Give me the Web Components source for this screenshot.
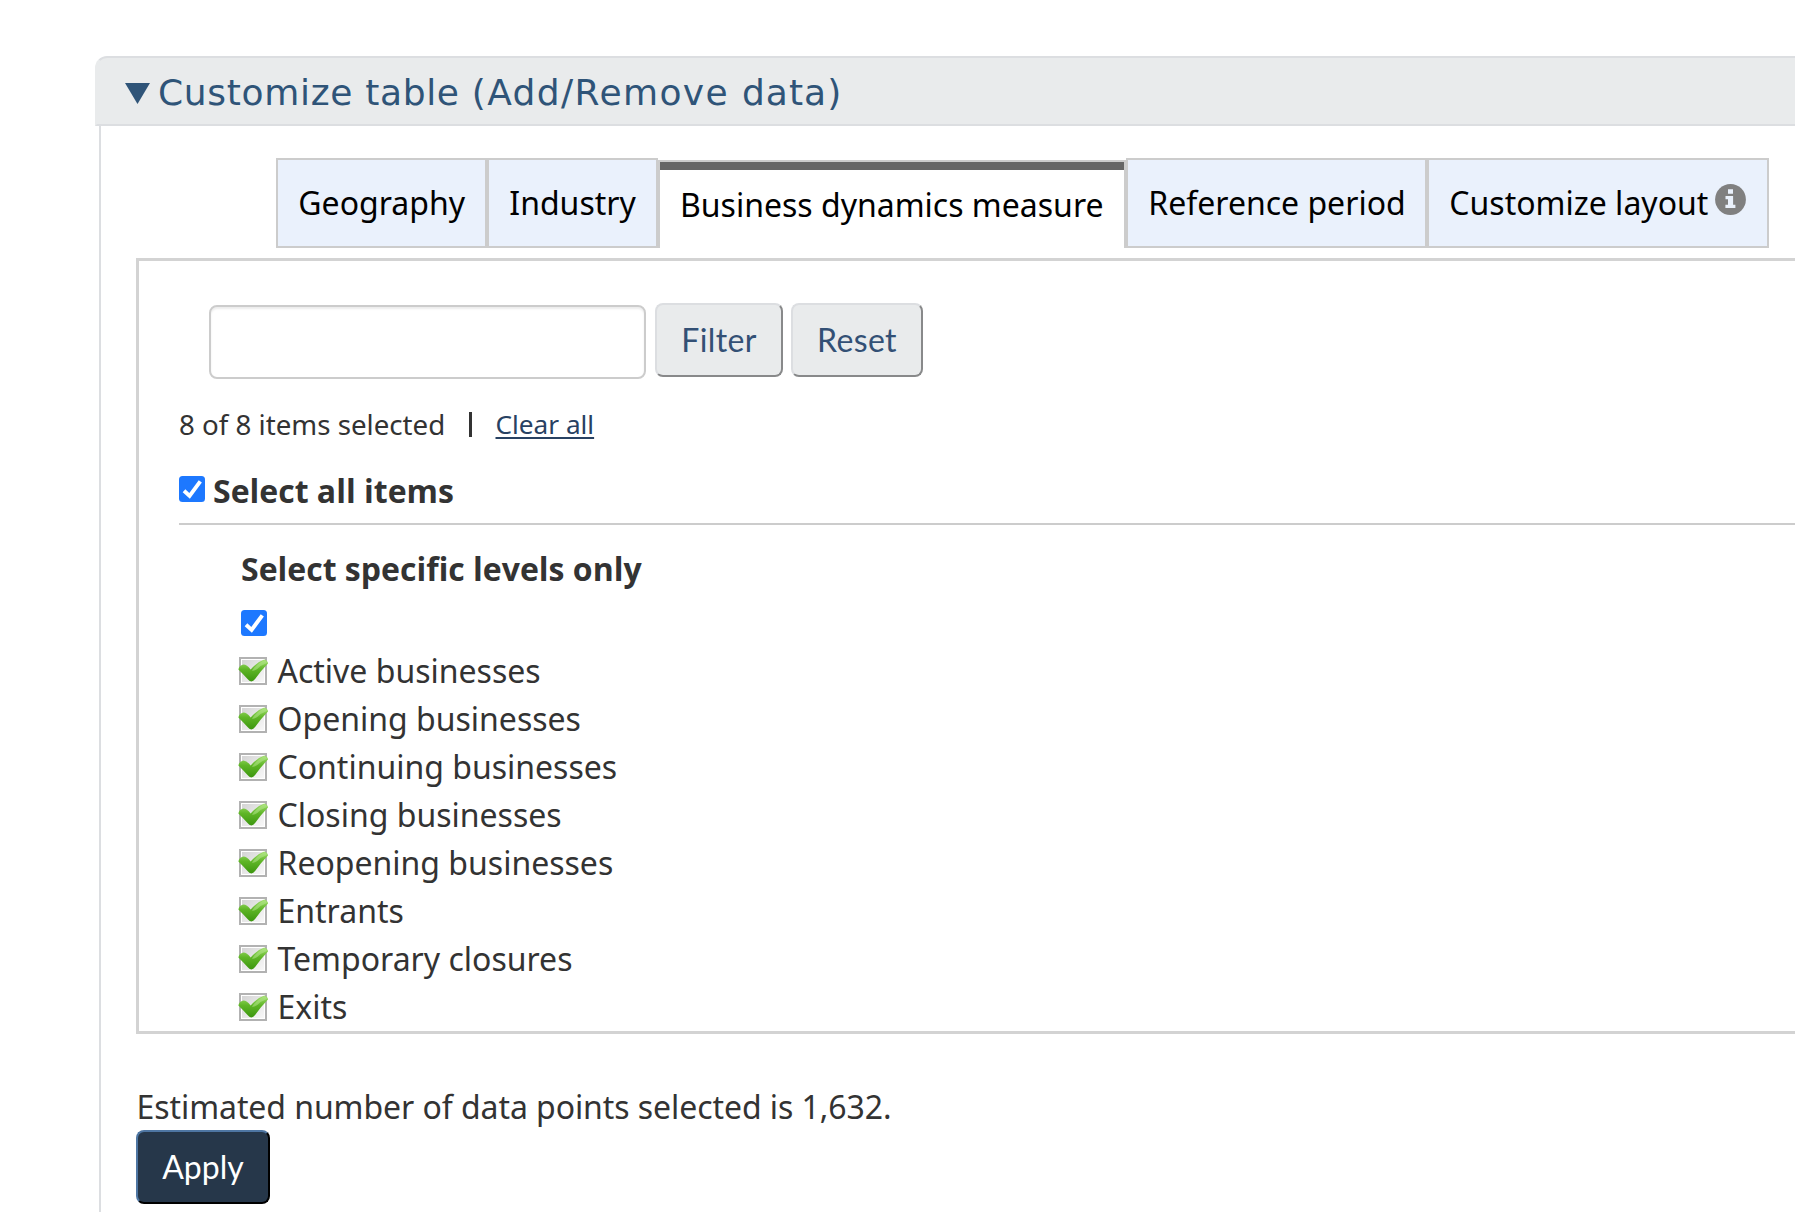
<!DOCTYPE html>
<html lang="en">
<head>
<meta charset="utf-8">
<title>Customize table</title>
<style>
html,body{margin:0;background:#fff}
body{height:1212px;overflow:hidden;font:32px/48px "Noto Sans","Open Sans",sans-serif;color:#333}
</style>
</head>
<body>
<customize-table></customize-table>
<script>
const define=(name,html,init)=>customElements.define(name,class extends HTMLElement{
  constructor(){super();this.attachShadow({mode:'open'}).innerHTML=html;}
  connectedCallback(){if(init)init.call(this,this.shadowRoot);}
});

define('panel-heading',`<style>
:host{display:flex;box-sizing:border-box;height:70px;background:#e9ebec;border:2px solid #dcdee1;border-left-color:#e9ebec;border-right:0;border-radius:12px 0 0 0;color:#2f5478;font:36px/66px "DejaVu Sans",sans-serif;padding:2px 0 0 28px}
svg{width:25px;height:21px;margin:23px 8px 0 0;flex:none}
span{white-space:nowrap;letter-spacing:1.02px}
</style><svg viewBox="0 0 25 21"><path d="M0 0H25L12.5 21Z" fill="#2f5478"/></svg><span><slot></slot></span>`);

define('info-icon',`<style>:host{display:block;width:31px;height:31px}svg{display:block}</style>
<svg width="31" height="31" viewBox="0 0 31 31"><circle cx="15.5" cy="15.5" r="15.4" fill="#808080"/><path fill="#eaf1fc" d="M13 5.2h5v4.6h-5zM10.5 12h7.6v8.8h2.3v3.3H10.4v-3.3H13v-5.5h-2.5z"/></svg>`);

define('tab-item',`<style>
:host{display:flex;box-sizing:border-box;height:90px;border:2px solid #ccc;background:#eaf1fc;color:#000;padding:19px 0 0 20.300px;white-space:nowrap}
:host([active]){background:#fff;border-bottom:0;margin-top:2px;height:88px;box-shadow:inset 0 8px #666;padding-left:20px}
::slotted(info-icon){margin:5px 0 0 7px}
</style><span><slot></slot></span><slot name="icon"></slot>`);

define('text-field',`<style>
:host{display:block}
input{display:block;box-sizing:border-box;width:437px;height:74px;margin:0;border:2px solid #ccc;border-radius:8px;background:#fff;box-shadow:inset 0 2px 2px rgba(0,0,0,.075);font:inherit;outline:0}
</style><input type="text" aria-label="Filter items">`);

define('push-button',`<style>
:host{display:block}
button{display:block;box-sizing:border-box;width:var(--w);height:74px;margin:0;padding:0;border:2px solid;border-color:#dcdee1 #88898a #88898a #dcdee1;border-radius:8px;background:#e9ebec;color:#335075;font:32px/46px Lato,sans-serif;letter-spacing:.35px}
:host([primary]) button{background:#26374a;color:#fff;border-color:#4e76a3 #000 #000 #4e76a3;letter-spacing:0}
</style><button><slot></slot></button>`);

define('blue-check',`<style>:host{display:block;width:26px;height:26px;flex:none}svg{display:block}</style>
<svg width="26" height="26" viewBox="0 0 26 26"><rect width="26" height="26" rx="3.5" fill="#1d78ff"/><path d="M5 14.7l5.6 5.2L21.3 5.3" fill="none" stroke="#fff" stroke-width="3.9"/></svg>`);

define('green-check',`<style>:host{display:block;width:32px;height:30px;flex:none}svg{display:block}</style>
<svg width="32" height="30" viewBox="0 0 32 30"><defs>
<linearGradient id="b" x1="0" y1="0" x2="1" y2="1"><stop offset="0" stop-color="#d4d4d4"/><stop offset="1" stop-color="#f8f8f8"/></linearGradient>
<linearGradient id="g" x1="0" y1="0" x2="0" y2="1"><stop offset="0" stop-color="#a4e070"/><stop offset=".45" stop-color="#5fb627"/><stop offset="1" stop-color="#3c960f"/></linearGradient></defs>
<rect x="2" y="2" width="26" height="26" fill="#fff" stroke="#b2b2b2" stroke-width="2"/><rect x="4" y="4" width="22" height="22" fill="url(#b)"/>
<path d="M.4 13.5Q1 9.500 5.300 8.500q3.700 0 7.300 5Q19.500 5.500 26.300 3.400q3.500 1 3.700 4.100Q23.500 14 17.300 22.800q-4 5.200-8 0Q5 18 .4 13.500z" fill="url(#g)"/><path d="M14 14.500Q20 6.500 26.500 4.200q2.600.8 2.600 2.800-6 2-9.800 6-4 2.500-5.300 1.500z" fill="#b9e994" opacity=".5"/></svg>`);

define('tree-item',`<style>:host{display:flex;height:48px;white-space:nowrap}green-check{margin:9px 7.500px 0 0}</style><green-check></green-check><span><slot></slot></span>`);

define('data-panel',`<style>
:host{display:block;box-sizing:border-box;height:776px;border:3px solid #d3d3d3;border-right:0;overflow:hidden}
.filter{display:flex;align-items:flex-start;margin:42px 0 0 70px}
.filter text-field{margin:2px 9px 0 0}.filter push-button{margin-right:8px}
.status{display:flex;height:40px;margin:22px 0 0 40px;font-size:27.700px;line-height:46px;white-space:nowrap}
.status i{width:3px;height:25px;background:#333;margin:11px 23.500px 0 0}
.status .n{width:290px}
.status a{color:#284162;font-size:26.200px;text-decoration:underline;text-decoration-thickness:2px;text-underline-offset:3px}
.all{display:flex;height:57px;margin:25px 0 0 40px;border-bottom:2px solid #ccc}
.all blue-check{margin:10px 8px 0 0}
.all b{padding-top:1px}
.levels{margin:20px 0 0 102px}
b{font-family:"Open Sans","Noto Sans",sans-serif;font-weight:700}
.lv{margin:17px 0 0 102px}.items{margin:11px 0 0 99px}
</style>
<div class="filter"><text-field></text-field><push-button style="--w:128px">Filter</push-button><push-button style="--w:132px">Reset</push-button></div>
<div class="status"><span class="n">8 of 8 items selected</span><i></i><a>Clear all</a></div>
<div class="all"><blue-check></blue-check><b>Select all items</b></div>
<div class="levels"><b>Select specific levels only</b></div>
<blue-check class="lv"></blue-check>
<div class="items"></div>`,function(r){
  for(const t of ['Active businesses','Opening businesses','Continuing businesses','Closing businesses','Reopening businesses','Entrants','Temporary closures','Exits']){
    const e=document.createElement('tree-item');e.textContent=t;r.querySelector('.items').append(e);
  }
});

define('customize-table',`<style>
:host{display:block;padding:56px 0 0 95px}
.body{box-sizing:border-box;margin-left:4px;border-left:2px solid #dcdee1;height:1090px;padding:32px 0 0 35px}
.tabs{display:flex;margin-left:140px;height:100px}
tab-item{width:var(--w);flex:none}
p{margin:50px 0 0 .5px;white-space:nowrap;line-height:46px;letter-spacing:-.07px}
.w1{letter-spacing:.68px}.w2{letter-spacing:.65px}.w3{letter-spacing:1.4px}
</style>
<panel-heading><span class="w1">Customize </span><span class="w2">table </span><span class="w3">(Add/Remove </span>data)</panel-heading>
<div class="body">
<div class="tabs">
<tab-item style="--w:211px">Geography</tab-item><tab-item style="--w:171px">Industry</tab-item><tab-item active style="--w:468px">Business dynamics measure</tab-item><tab-item style="--w:301px">Reference period</tab-item><tab-item style="--w:342px">Customize layout<info-icon slot="icon"></info-icon></tab-item>
</div>
<data-panel></data-panel>
<p>Estimated number of data points selected is 1,632.</p>
<push-button primary style="--w:134px">Apply</push-button>
</div>`);
</script>
</body>
</html>
